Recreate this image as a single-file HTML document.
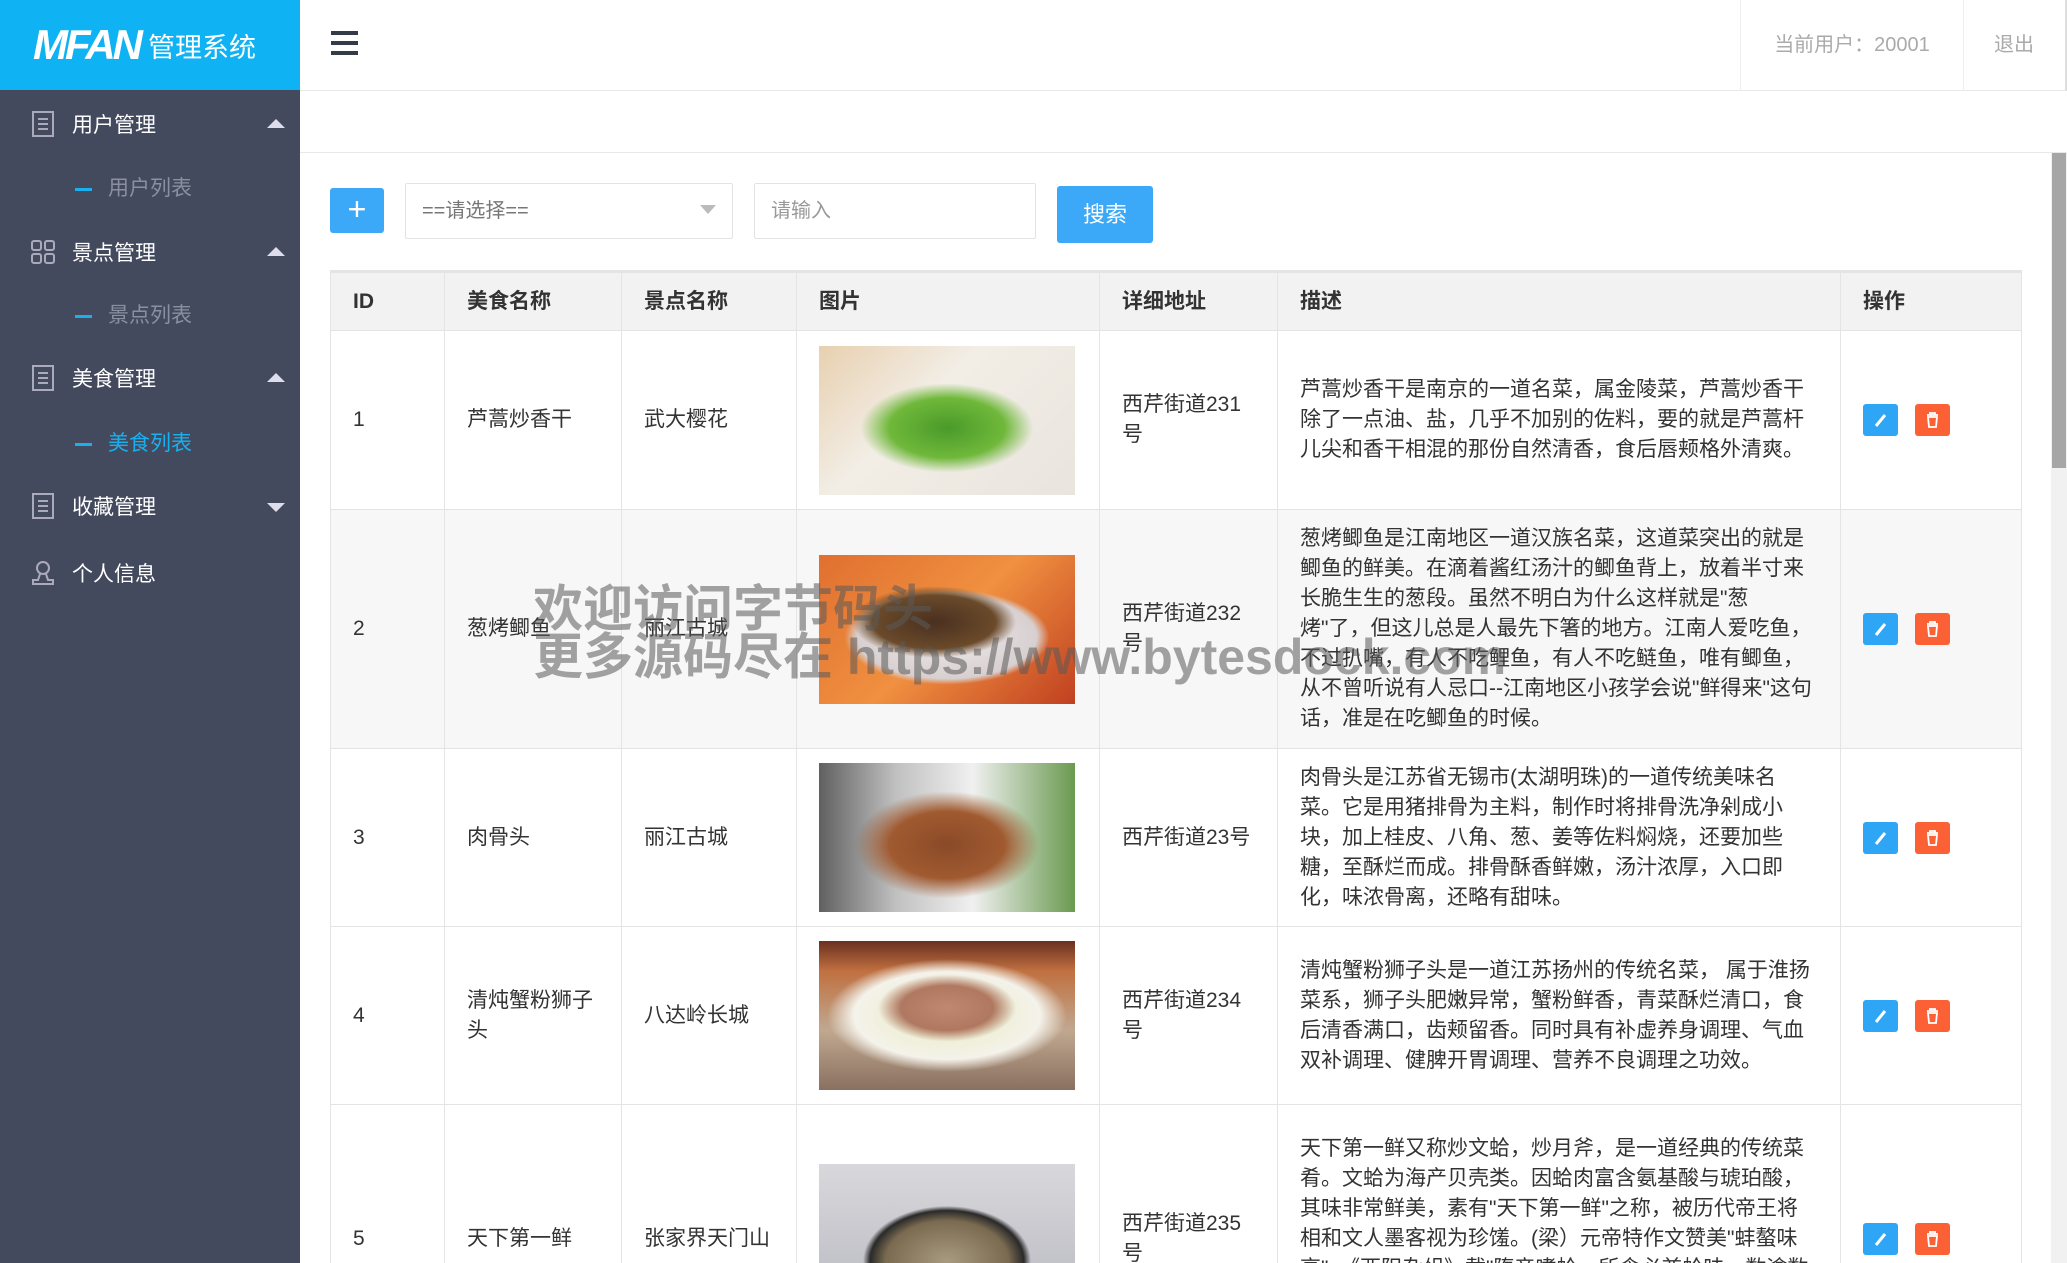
<!DOCTYPE html>
<html><head><meta charset="utf-8"><style>
*{box-sizing:border-box;margin:0;padding:0}
html,body{width:2067px;height:1263px;overflow:hidden;background:#fff;font-family:"Liberation Sans","Noto Sans CJK SC",sans-serif;color:#333}
#wrap{position:relative;width:2067px;height:1263px;overflow:hidden}
#side{position:absolute;left:0;top:0;width:300px;height:1263px;background:#434a5d}
#logo{height:90px;background:#0fb2f2;color:#fff;display:flex;align-items:center;padding-left:33px}
#logo b{font-style:italic;font-size:42px;font-weight:900;letter-spacing:-3px}
#logo span{font-size:27px;margin-left:8px}
.mi{position:absolute;left:0;width:300px;font-size:21px;color:#fff}
.mi .ic{position:absolute;left:30px;top:-14px;width:26px;height:28px}
.mi .t{position:absolute;left:72px;top:-15px}
.mi .ar{position:absolute;left:267px;top:-5px;width:0;height:0;border-left:9px solid transparent;border-right:9px solid transparent}
.up{border-bottom:9px solid #dde}
.dn{border-top:9px solid #dde}
.sub{position:absolute;left:75px;font-size:21px;color:#8a90a0}
.sub i{display:inline-block;width:17px;height:3px;background:#1ab0f0;vertical-align:middle;margin-right:16px}
#head{position:absolute;left:300px;top:0;right:0;height:91px;border-bottom:1px solid #e8e8e8;border-right:2px solid #ddd}
#ham{position:absolute;left:31px;top:31px;width:27px}
#ham i{display:block;height:4px;background:#333a48;margin-bottom:6px}
#user{position:absolute;left:1740px;top:0;width:224px;height:91px;border-left:1px solid #eee;border-right:1px solid #eee;color:#aaa;font-size:20px;text-align:center;line-height:90px}
#out{position:absolute;left:1984px;top:0;width:60px;color:#aaa;font-size:20px;line-height:90px;text-align:center}
#band{position:absolute;left:300px;top:92px;right:0;height:61px;border-bottom:1px solid #e8e8e8}
#sb{position:absolute;left:2051px;top:153px;width:16px;height:1110px;background:#f1f1f1}
#sb i{position:absolute;left:1px;top:0;width:14px;height:315px;background:#a6a6a6}
.btn{position:absolute;background:#3ca8f8;border-radius:3px;color:#fff;text-align:center}
.inp{position:absolute;border:1px solid #e3e3e3;border-radius:2px;color:#777;font-size:20px;padding-left:16px}
table{position:absolute;left:330px;top:270px;width:1691px;border-collapse:collapse;table-layout:fixed;font-size:21px}
td,th{border:1px solid #e4e4e4;padding:0 22px;vertical-align:middle;text-align:left;line-height:30px}
th{background:#f2f2f2;height:59px;font-weight:bold;border-top:3px solid #e4e4e4}
tr.g td{background:#f7f7f7}
td .img{width:256px;height:149px}
.ed,.de{display:inline-block;width:35px;height:32px;border-radius:3px;vertical-align:middle;position:relative}
.ed{background:#2ea5f5;margin-right:17px}.de{background:#fb6135}
.ed svg,.de svg{position:absolute;left:9px;top:7px;width:17px;height:18px}
.wm{position:absolute;left:533px;font-size:50px;font-weight:bold;color:rgba(90,90,90,.55);white-space:nowrap;line-height:1}
</style></head><body><div id="wrap">
<div id="side">
 <div id="logo"><b>MFAN</b><span>管理系统</span></div>
 <div class="mi" style="top:124px"><svg class="ic" viewBox="0 0 26 28"><rect x="3" y="2" width="20" height="24" fill="none" stroke="#aab" stroke-width="2"/><path d="M8 9h10M8 14h10M8 19h10" stroke="#aab" stroke-width="2"/></svg><span class="t">用户管理</span><i class="ar up"></i></div>
 <div class="sub" style="top:172px"><i></i>用户列表</div>
 <div class="mi" style="top:252px"><svg class="ic" viewBox="0 0 26 28"><rect x="2" y="3" width="9" height="9" rx="2" fill="none" stroke="#aab" stroke-width="2"/><rect x="15" y="3" width="9" height="9" rx="2" fill="none" stroke="#aab" stroke-width="2"/><rect x="2" y="16" width="9" height="9" rx="2" fill="none" stroke="#aab" stroke-width="2"/><rect x="15" y="16" width="9" height="9" rx="2" fill="none" stroke="#aab" stroke-width="2"/></svg><span class="t">景点管理</span><i class="ar up"></i></div>
 <div class="sub" style="top:299px"><i></i>景点列表</div>
 <div class="mi" style="top:378px"><svg class="ic" viewBox="0 0 26 28"><rect x="3" y="2" width="20" height="24" fill="none" stroke="#aab" stroke-width="2"/><path d="M8 9h10M8 14h10M8 19h10" stroke="#aab" stroke-width="2"/></svg><span class="t">美食管理</span><i class="ar up"></i></div>
 <div class="sub" style="top:427px;color:#1ab0f0"><i></i>美食列表</div>
 <div class="mi" style="top:506px"><svg class="ic" viewBox="0 0 26 28"><rect x="3" y="2" width="20" height="24" fill="none" stroke="#aab" stroke-width="2"/><path d="M8 9h10M8 14h10M8 19h10" stroke="#aab" stroke-width="2"/></svg><span class="t">收藏管理</span><i class="ar dn" style="top:-3px"></i></div>
 <div class="mi" style="top:573px"><svg class="ic" viewBox="0 0 26 28"><circle cx="13" cy="9" r="6" fill="none" stroke="#aab" stroke-width="2"/><path d="M10 15l-2 6H3v4h20v-4h-5l-2-6" fill="none" stroke="#aab" stroke-width="2"/></svg><span class="t">个人信息</span></div>
</div>
<div id="head"><div id="ham"><i></i><i></i><i></i></div></div>
<div id="user">当前用户：20001</div><div id="out">退出</div>
<div id="band"></div>
<div id="sb"><i></i></div>
<div class="btn" style="left:330px;top:188px;width:54px;height:45px;font-size:32px;line-height:42px">+</div>
<div class="inp" style="left:405px;top:183px;width:328px;height:56px;line-height:54px">==请选择==<span style="position:absolute;right:16px;top:21px;border-left:8px solid transparent;border-right:8px solid transparent;border-top:9px solid #bbb"></span></div>
<div class="inp" style="left:754px;top:183px;width:282px;height:56px;line-height:54px;color:#999">请输入</div>
<div class="btn" style="left:1057px;top:186px;width:96px;height:57px;font-size:22px;line-height:57px">搜索</div>
<table>
<colgroup><col style="width:114px"><col style="width:177px"><col style="width:175px"><col style="width:303px"><col style="width:178px"><col style="width:563px"><col style="width:181px"></colgroup>
<tr><th>ID</th><th>美食名称</th><th>景点名称</th><th>图片</th><th>详细地址</th><th>描述</th><th>操作</th></tr>
<tr style="height:179px"><td>1</td><td>芦蒿炒香干</td><td>武大樱花</td><td><div class="img" style="background:radial-gradient(ellipse 45% 40% at 50% 55%,#4a9a2a,#6fb83a 50%,transparent 75%),linear-gradient(135deg,#e8d0b0,#f2eee6 40%,#e9e5de)"></div></td><td>西芹街道231号</td><td>芦蒿炒香干是南京的一道名菜，属金陵菜，芦蒿炒香干除了一点油、盐，几乎不加别的佐料，要的就是芦蒿杆儿尖和香干相混的那份自然清香，食后唇颊格外清爽。</td><td><span class="ed"><svg viewBox="0 0 17 18"><path d="M4 15l9-11" stroke="#fff" stroke-width="3"/></svg></span><span class="de"><svg viewBox="0 0 17 18"><path d="M3 4h11M6 4V2h5v2M4 6h9l-1 10H5z" fill="none" stroke="#fff" stroke-width="1.8"/></svg></span></td></tr>
<tr class="g" style="height:239px"><td>2</td><td>葱烤鲫鱼</td><td>丽江古城</td><td><div class="img" style="background:radial-gradient(ellipse 40% 30% at 45% 45%,#4a3020,#6a4a2a 60%,transparent 80%),radial-gradient(ellipse 50% 40% at 50% 55%,#f0eaea,#d8d0d0 70%,transparent 80%),linear-gradient(135deg,#e07030,#f09040 50%,#c04020)"></div></td><td>西芹街道232号</td><td>葱烤鲫鱼是江南地区一道汉族名菜，这道菜突出的就是鲫鱼的鲜美。在滴着酱红汤汁的鲫鱼背上，放着半寸来长脆生生的葱段。虽然不明白为什么这样就是"葱烤"了，但这儿总是人最先下箸的地方。江南人爱吃鱼，不过扒嘴，有人不吃鲤鱼，有人不吃鲢鱼，唯有鲫鱼，从不曾听说有人忌口--江南地区小孩学会说"鲜得来"这句话，准是在吃鲫鱼的时候。</td><td><span class="ed"><svg viewBox="0 0 17 18"><path d="M4 15l9-11" stroke="#fff" stroke-width="3"/></svg></span><span class="de"><svg viewBox="0 0 17 18"><path d="M3 4h11M6 4V2h5v2M4 6h9l-1 10H5z" fill="none" stroke="#fff" stroke-width="1.8"/></svg></span></td></tr>
<tr style="height:178px"><td>3</td><td>肉骨头</td><td>丽江古城</td><td><div class="img" style="background:radial-gradient(ellipse 45% 45% at 50% 55%,#8a4a28,#a05a30 50%,transparent 80%),linear-gradient(90deg,#606060,#c0c0c0 30%,#f0f0f0 60%,#6a9a50)"></div></td><td>西芹街道23号</td><td style="padding-right:32px">肉骨头是江苏省无锡市(太湖明珠)的一道传统美味名菜。它是用猪排骨为主料，制作时将排骨洗净剁成小块，加上桂皮、八角、葱、姜等佐料焖烧，还要加些糖，至酥烂而成。排骨酥香鲜嫩，汤汁浓厚，入口即化，味浓骨离，还略有甜味。</td><td><span class="ed"><svg viewBox="0 0 17 18"><path d="M4 15l9-11" stroke="#fff" stroke-width="3"/></svg></span><span class="de"><svg viewBox="0 0 17 18"><path d="M3 4h11M6 4V2h5v2M4 6h9l-1 10H5z" fill="none" stroke="#fff" stroke-width="1.8"/></svg></span></td></tr>
<tr style="height:178px"><td>4</td><td>清炖蟹粉狮子头</td><td>八达岭长城</td><td><div class="img" style="background:radial-gradient(ellipse 30% 25% at 50% 45%,#c08870,#b07860 60%,transparent 90%),radial-gradient(ellipse 52% 42% at 50% 50%,#e8ecc0,#f4f2ea 70%,transparent 90%),linear-gradient(180deg,#6a3020,#c07040 20%,#c0a890 60%,#8a7060)"></div></td><td>西芹街道234号</td><td>清炖蟹粉狮子头是一道江苏扬州的传统名菜， 属于淮扬菜系，狮子头肥嫩异常，蟹粉鲜香，青菜酥烂清口，食后清香满口，齿颊留香。同时具有补虚养身调理、气血双补调理、健脾开胃调理、营养不良调理之功效。</td><td><span class="ed"><svg viewBox="0 0 17 18"><path d="M4 15l9-11" stroke="#fff" stroke-width="3"/></svg></span><span class="de"><svg viewBox="0 0 17 18"><path d="M3 4h11M6 4V2h5v2M4 6h9l-1 10H5z" fill="none" stroke="#fff" stroke-width="1.8"/></svg></span></td></tr>
<tr style="height:268px"><td>5</td><td>天下第一鲜</td><td>张家界天门山</td><td><div class="img" style="background:radial-gradient(ellipse 40% 45% at 50% 65%,#a89a80,#7a6a50 60%,#2a2a2a 75%,transparent 82%),linear-gradient(180deg,#d8d8dc,#b8b8c0)"></div></td><td>西芹街道235号</td><td>天下第一鲜又称炒文蛤，炒月斧，是一道经典的传统菜肴。文蛤为海产贝壳类。因蛤肉富含氨基酸与琥珀酸，其味非常鲜美，素有"天下第一鲜"之称，被历代帝王将相和文人墨客视为珍馐。(梁）元帝特作文赞美"蚌螯味高"。《酉阳杂俎》载"隋帝嗜蛤，所食必兼蛤味，数逾数千万矣"。文蛤肉嫩味鲜，营养丰富，深受人们的喜爱，是江苏南通地区的传统名菜，历史悠久，久负盛名。</td><td><span class="ed"><svg viewBox="0 0 17 18"><path d="M4 15l9-11" stroke="#fff" stroke-width="3"/></svg></span><span class="de"><svg viewBox="0 0 17 18"><path d="M3 4h11M6 4V2h5v2M4 6h9l-1 10H5z" fill="none" stroke="#fff" stroke-width="1.8"/></svg></span></td></tr>
</table>
<div class="wm" style="top:584px">欢迎访问字节码头</div>
<div class="wm" style="top:632px">更多源码尽在 https://www.bytesdock.com</div>
</div></body></html>
